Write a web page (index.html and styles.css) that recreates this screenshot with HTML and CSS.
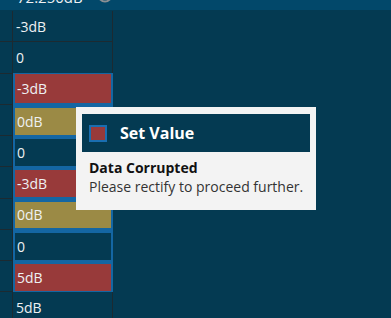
FILE: index.html
```html
<!DOCTYPE html>
<html lang="en">
<head>
  <meta charset="UTF-8" />
  <title>Level Table</title>
  <link rel="stylesheet" href="styles.css">
</head>
<body>
  <div class="header">
    <span class="header-value">72.250dB</span>
    <svg class="header-icon" width="16" height="16" viewBox="0 0 16 16">
      <circle cx="8" cy="8" r="6.5" fill="none" stroke="#8b8f93" stroke-width="2"/>
    </svg>
  </div>

  <div class="grid">
    <div class="gutter">
      <div class="gutter-cell"></div>
      <div class="gutter-cell"></div>
      <div class="gutter-cell"></div>
      <div class="gutter-cell"></div>
      <div class="gutter-cell"></div>
      <div class="gutter-cell"></div>
      <div class="gutter-cell"></div>
      <div class="gutter-cell"></div>
      <div class="gutter-cell"></div>
      <div class="gutter-cell"></div>
    </div>

    <div class="column">
      <div class="cell">-3dB</div>
      <div class="cell">0</div>

      <div class="selection">
        <div class="sel-row"><div class="fill red">-3dB</div></div>
        <div class="sel-row"><div class="fill olive">0dB</div></div>
        <div class="sel-row"><div class="fill plain">0</div></div>
        <div class="sel-row"><div class="fill red">-3dB</div></div>
        <div class="sel-row"><div class="fill olive">0dB</div></div>
        <div class="sel-row"><div class="fill plain">0</div></div>
        <div class="sel-row"><div class="fill red">5dB</div></div>
      </div>

      <div class="cell">5dB</div>
    </div>
  </div>

  <div class="popup">
    <div class="popup-head">
      <span class="popup-swatch"></span>
      <span class="popup-title">Set Value</span>
    </div>
    <div class="popup-body">
      <div class="popup-error">Data Corrupted</div>
      <div class="popup-hint">Please rectify to proceed further.</div>
    </div>
  </div>
</body>
</html>
```

FILE: styles.css
```css
* {
  margin: 0;
  padding: 0;
  box-sizing: border-box;
}
body {
  background-color: #043a52;
  font-family: "Open Sans", "Noto Sans", sans-serif;
  font-size: 14px;
  color: #eef1f3;
  width: 391px;
  height: 318px;
  overflow: hidden;
}
.header {
  height: 10px;
  margin-bottom: 1px;
  background: #02486a;
  overflow: hidden;
  display: flex;
  align-items: flex-start;
}
.header-value {
  display: block;
  margin: -13px 0 0 17px;
  line-height: 20px;
  font-size: 15px;
}
.header-icon {
  margin: -13px 0 0 14px;
}
.grid {
  display: flex;
}
.gutter {
  width: 13px;
  border-right: 1px solid #1c2a31;
}
.gutter-cell {
  height: 31.25px;
  border-bottom: 1px solid #1c2a31;
}
.column {
  width: 100px;
  border-right: 1px solid #1c2a31;
}
.cell {
  height: 31.25px;
  border-bottom: 1px solid #1c2a31;
  display: flex;
  align-items: center;
  padding-left: 3px;
}
.selection {
  margin: -1px -1px 0 0;
  background: #1466a3;
}
.sel-row {
  height: 31.25px;
  display: flex;
}
.sel-row:first-child {
  height: 32.25px;
}
.fill {
  flex: 1;
  margin: 3px 2px 1.5px 2px;
  display: flex;
  align-items: center;
  padding-left: 2px;
}
.sel-row:first-child .fill {
  margin-top: 1px;
}
.red {
  background: #983a3a;
}
.olive {
  background: #9b8a45;
}
.plain {
  background: #043a52;
}
.popup {
  position: absolute;
  left: 76px;
  top: 107px;
  width: 240px;
  height: 103px;
  background: #f3f3f3;
  padding: 7px 6px 0 6px;
  color: #111;
}
.popup-head {
  height: 38px;
  background: #043a52;
  display: flex;
  align-items: center;
  padding-left: 7px;
}
.popup-swatch {
  width: 18px;
  height: 17px;
  background: #983a3a;
  border: 2px solid #1a6eb0;
}
.popup-title {
  margin-left: 13px;
  font-size: 16px;
  font-weight: 700;
  color: #ffffff;
}
.popup-body {
  padding: 6px 0 0 7px;
  font-size: 14px;
  line-height: 19px;
}
.popup-error {
  font-weight: 700;
}
.popup-hint {
  color: #333;
}
```
